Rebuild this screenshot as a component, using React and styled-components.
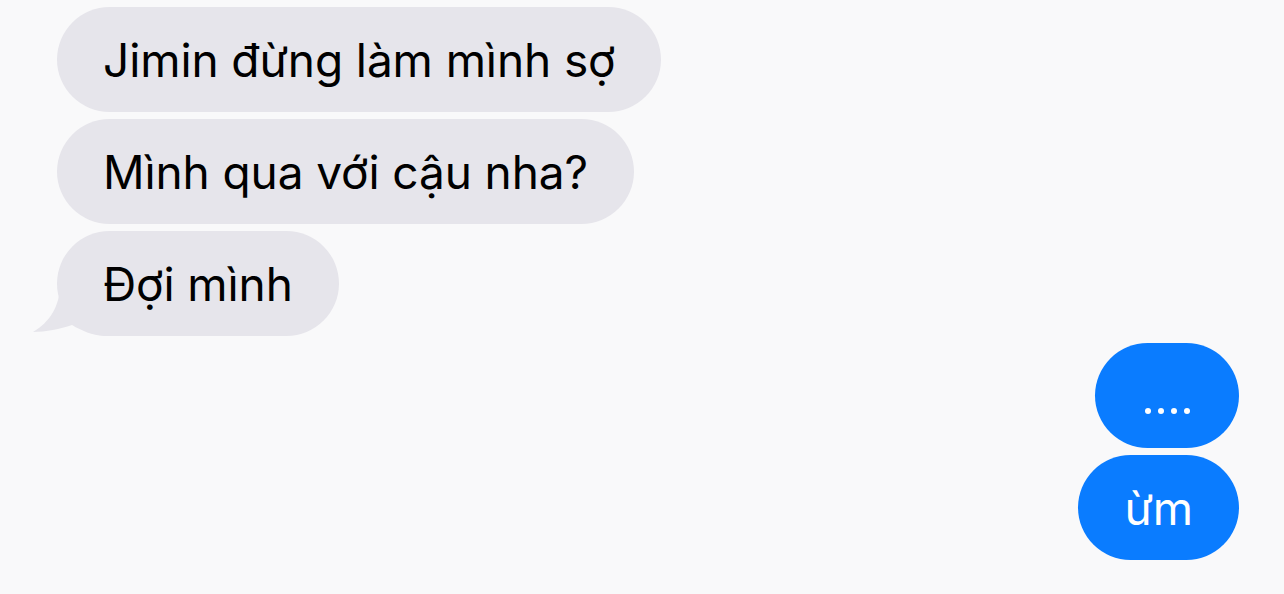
import React from "react";
import styled, { createGlobalStyle } from "styled-components";

const Global = createGlobalStyle`
  html, body {
    margin: 0;
    padding: 0;
    background: #f9f9fa;
  }
`;

const Thread = styled.div`
  width: 1284px;
  height: 594px;
  overflow: hidden;
  box-sizing: border-box;
  padding: 7px 45px 0 57px;
  display: flex;
  flex-direction: column;
  gap: 7px;
  background: #f9f9fa;
  font-family: Inter, "Noto Sans", sans-serif;
`;

const Row = styled.div`
  display: flex;
  justify-content: ${(p) => (p.$sent ? "flex-end" : "flex-start")};
`;

const Bubble = styled.div`
  position: relative;
  box-sizing: border-box;
  height: 105px;
  min-width: 144px;
  padding: 0 46px 0 46px;
  border-radius: 53px;
  display: flex;
  align-items: center;
  justify-content: center;
  font-size: 46px;
  letter-spacing: -0.1px;
  white-space: nowrap;
  background: ${(p) => (p.$sent ? "#0a7cff" : "#e6e5eb")};
  color: ${(p) => (p.$sent ? "#ffffff" : "#000000")};
`;

const Label = styled.span`
  position: relative;
`;

const Tail = styled.svg`
  position: absolute;
  left: -27px;
  bottom: 0;
  width: 90px;
  height: 52px;
`;

const Dots = styled.span`
  display: flex;
  gap: 7px;
  padding-top: 30px;

  i {
    width: 6px;
    height: 6px;
    border-radius: 50%;
    background: #fff;
  }
`;

const received = ["Jimin đừng làm mình sợ", "Mình qua với cậu nha?", "Đợi mình"];

export default function App() {
  return (
    <>
      <Global />
      <Thread>
        {received.map((text, i) => (
          <Row key={text}>
            <Bubble>
              {i === received.length - 1 && (
                <Tail viewBox="0 0 90 52">
                  <path
                    d="M30 0 C30 22 20 38 3 48 C16 48 30 45 42 41 C52 47 62 51 74 52 L90 52 L90 0 Z"
                    fill="#e6e5eb"
                  />
                </Tail>
              )}
              <Label>{text}</Label>
            </Bubble>
          </Row>
        ))}
        <Row $sent>
          <Bubble $sent>
            <Dots>
              <i />
              <i />
              <i />
              <i />
            </Dots>
          </Bubble>
        </Row>
        <Row $sent>
          <Bubble $sent>ừm</Bubble>
        </Row>
      </Thread>
    </>
  );
}
